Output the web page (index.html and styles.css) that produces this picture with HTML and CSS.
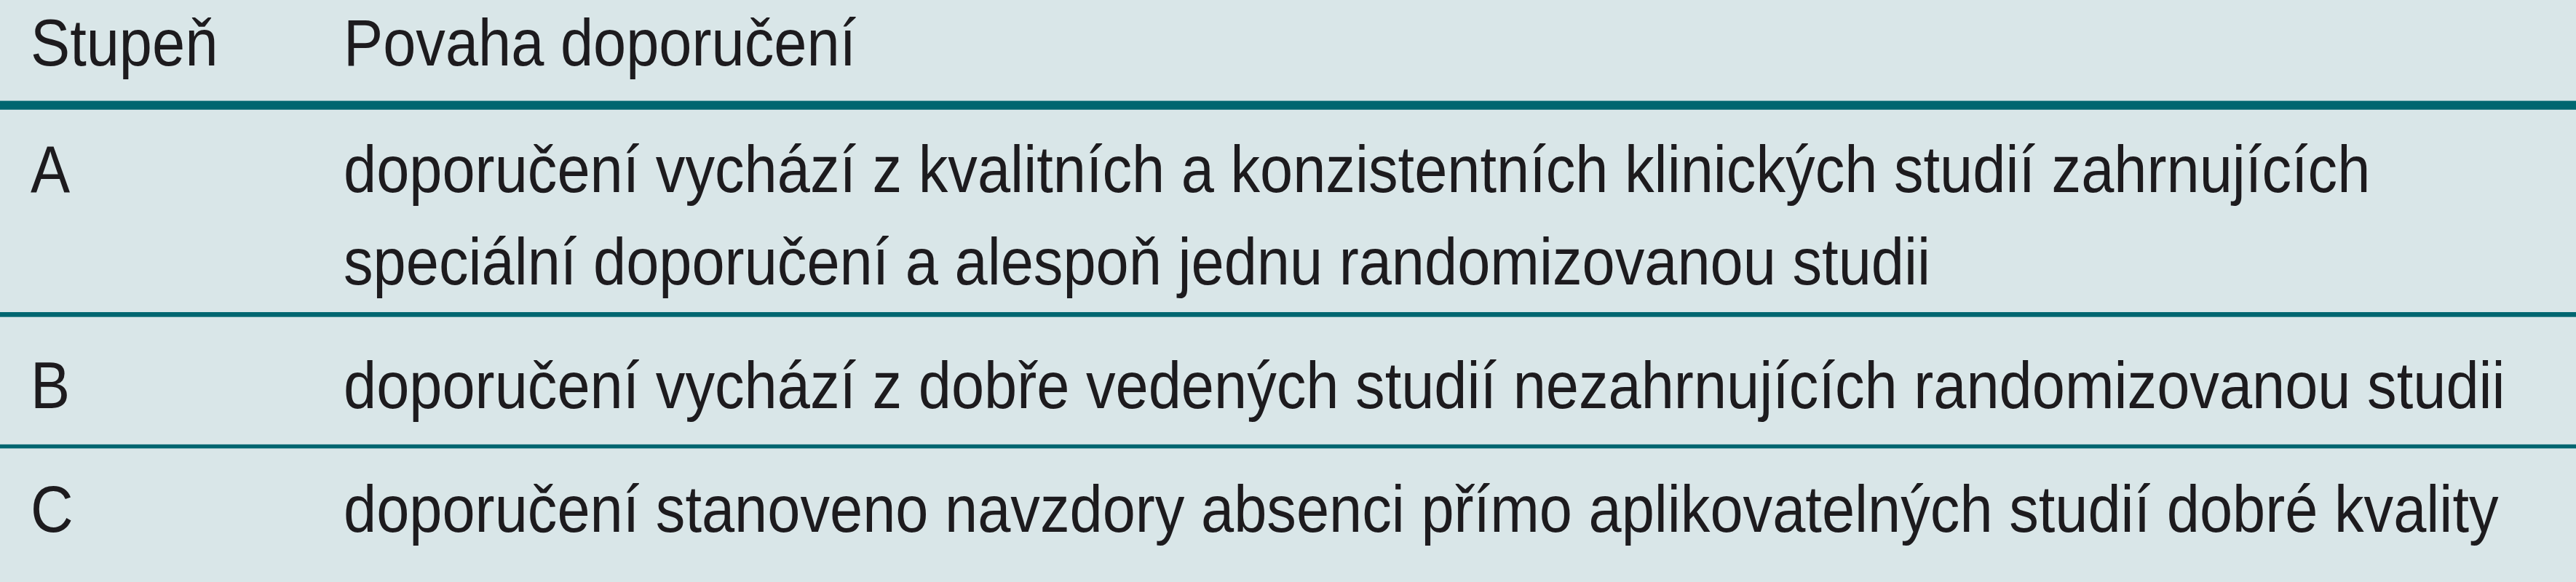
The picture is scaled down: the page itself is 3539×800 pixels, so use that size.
FILE: index.html
```html
<!DOCTYPE html>
<html lang="cs">
<head>
<meta charset="utf-8">
<title>Stupně doporučení</title>
<link rel="stylesheet" href="styles.css">
</head>
<body>
<div class="table">
  <div class="row head">
    <div class="grade">Stupeň</div>
    <div class="desc">Povaha doporučení</div>
  </div>
  <div class="row row-a">
    <div class="grade">A</div>
    <div class="desc">doporučení vychází z kvalitních a konzistentních klinických studií zahrnujících<br>speciální doporučení a alespoň jednu randomizovanou studii</div>
  </div>
  <div class="row row-b">
    <div class="grade">B</div>
    <div class="desc">doporučení vychází z dobře vedených studií nezahrnujících randomizovanou studii</div>
  </div>
  <div class="row row-c">
    <div class="grade">C</div>
    <div class="desc">doporučení stanoveno navzdory absenci přímo aplikovatelných studií dobré kvality</div>
  </div>
</div>
</body>
</html>
```
FILE: styles.css
```css
html, body {
  margin: 0;
  padding: 0;
  background: #d9e6e8;
}
body {
  width: 3539px;
  height: 800px;
  overflow: hidden;
}
/* the original typeface is a tall condensed grotesque: Arial-metric glyphs
   at a smaller size, stretched vertically (all vertical sizes are divided by 1.1086) */
.table {
  width: 3539px;
  transform: scaleY(1.1086);
  transform-origin: 0 0;
  font-family: "Liberation Sans", Arial, sans-serif;
  font-size: 81.2px;
  color: #1d1b1e;
}
.row {
  display: grid;
  grid-template-columns: 430px 1fr;
  padding-left: 42px;
  line-height: 114.55px;
  white-space: nowrap;
}
.head {
  line-height: 90.2px;
  padding-top: 8.1px;
  padding-bottom: 27.1px;
  border-bottom: 11.73px solid #006670;
}
.row-a {
  padding-top: 17.1px;
  padding-bottom: 4.5px;
  border-bottom: 6.31px solid #006670;
}
.row-b {
  padding-top: 28px;
  padding-bottom: 15.3px;
  border-bottom: 5.41px solid #006670;
}
.row-c {
  padding-top: 18px;
}
```
